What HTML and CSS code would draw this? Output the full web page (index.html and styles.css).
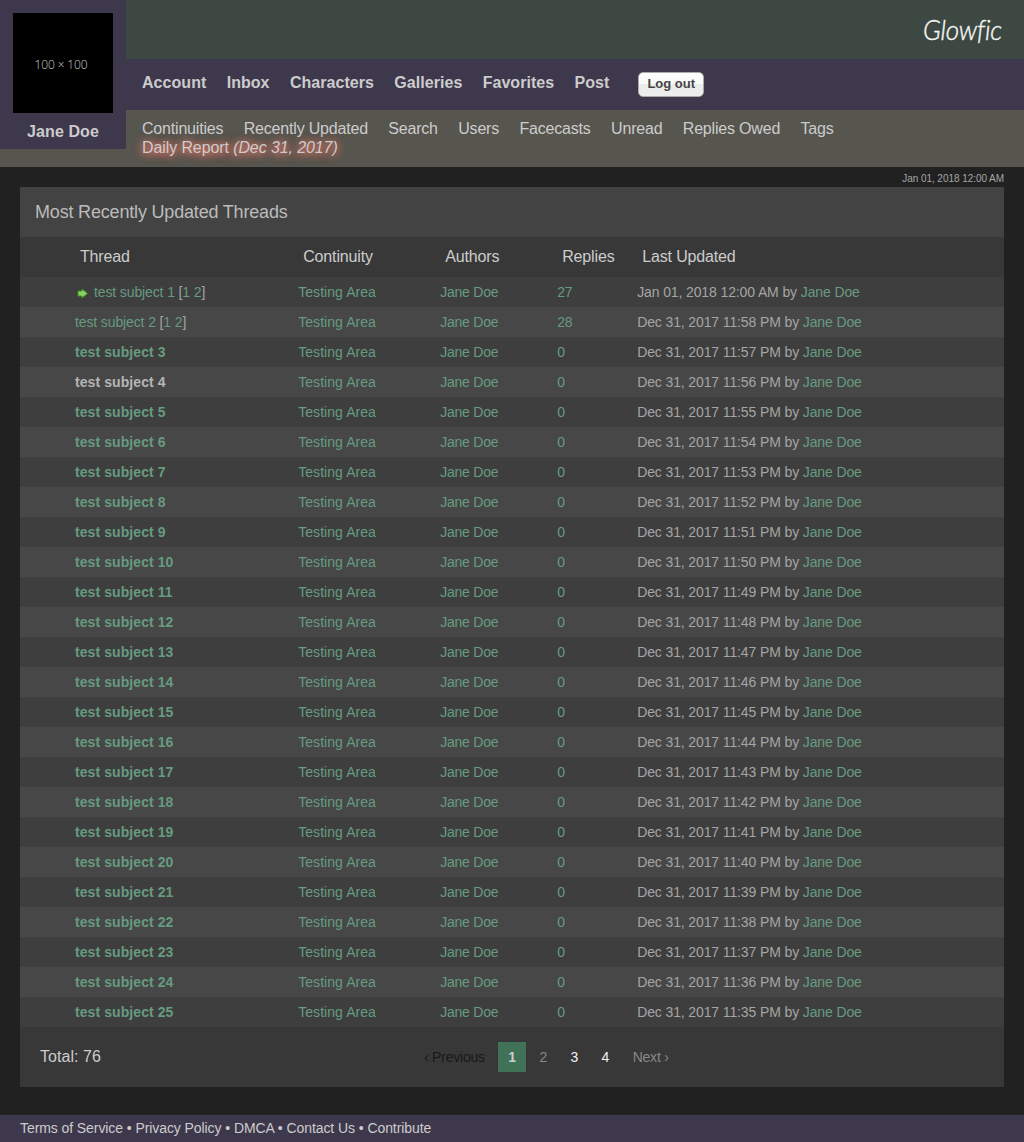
FILE: index.html
```
<!DOCTYPE html>
<html lang="en">
<head>
<meta charset="utf-8">
<title>Glowfic - Most Recently Updated Threads</title>
<link rel="stylesheet" href="styles.css">
</head>
<body>
<header class="header">
  <div class="banner">
    <svg class="logo" width="84" height="36" viewBox="0 0 84 36" role="img"><text x="3" y="27" textLength="79" lengthAdjust="spacingAndGlyphs">Glowfic</text></svg>
  </div>
  <aside class="user">
    <div class="avatar">100 × 100</div>
    <a class="username">Jane Doe</a>
  </aside>
  <nav class="menu">
    <a>Account</a><a>Inbox</a><a>Characters</a><a>Galleries</a><a>Favorites</a><a>Post</a>
    <button class="logout">Log out</button>
  </nav>
  <nav class="submenu">
    <div class="links"><a>Continuities</a><a>Recently Updated</a><a>Search</a><a>Users</a><a>Facecasts</a><a>Unread</a><a>Replies Owed</a><a>Tags</a></div>
    <a class="report">Daily Report <em>(Dec 31, 2017)</em></a>
  </nav>
</header>
<main class="content">
  <div class="clock">Jan 01, 2018 12:00 AM</div>
  <h1 class="title">Most Recently Updated Threads</h1>
  <table class="threads">
    <colgroup><col class="c-thread"><col class="c-continuity"><col class="c-authors"><col class="c-replies"><col></colgroup>
    <thead><tr><th>Thread</th><th>Continuity</th><th>Authors</th><th>Replies</th><th>Last Updated</th></tr></thead>
    <tbody id="rows"></tbody>
  </table>
  <div class="pager">
    <div class="total">Total: 76</div>
    <div class="pages"><span class="prev">‹ Previous</span><span class="current">1</span><a class="visited">2</a><a>3</a><a>4</a><a class="visited next">Next ›</a></div>
  </div>
</main>
<footer class="footer"><a>Terms of Service</a> • <a>Privacy Policy</a> • <a>DMCA</a> • <a>Contact Us</a> • <a>Contribute</a></footer>
<script src="app.js"></script>
</body>
</html>
```
FILE: styles.css
```
body {
  margin: 0;
  min-height: 1142px;
  display: flex;
  flex-direction: column;
  background: #212121;
  color: #a5a5a5;
  font: 14px/18px "Liberation Sans", Arial, Helvetica, sans-serif;
  letter-spacing: -0.15px;
}
.header {
  display: grid;
  grid-template-columns: 126px 1fr;
  grid-template-rows: 59px 51px 57px;
  background: #56554e;
  color: #ccc;
  font-size: 16px;
}
.banner {
  grid-column: 2;
  grid-row: 1;
  display: flex;
  justify-content: flex-end;
  padding: 13px 20px 0 0;
  background: #3c4841;
}
.logo { overflow: visible; }
.logo text {
  fill: #f5f5f5;
  font: italic 300 27px Lato, sans-serif;
  stroke: #f5f5f5;
  stroke-width: 0.4px;
}
.user {
  grid-column: 1;
  grid-row: 1 / 4;
  height: 149px;
  box-sizing: border-box;
  padding-top: 13px;
  display: flex;
  flex-direction: column;
  align-items: center;
  background: #3e384d;
}
.avatar {
  width: 100px;
  height: 100px;
  box-sizing: border-box;
  padding-right: 4px;
  background: #000;
  color: #ccc;
  font: 300 12px/104px "Open Sans", sans-serif;
  text-align: center;
}
.username {
  margin-top: 10px;
  font-weight: bold;
  letter-spacing: 0.1px;
}
.menu {
  display: flex;
  gap: 20.3px;
  padding: 15px 16px 0;
  background: #3e384d;
  font-weight: bold;
  letter-spacing: 0.05px;
}
.logout {
  width: 66px;
  height: 25px;
  margin: -2px 0 0 8.5px;
  padding: 0 0 2px;
  border: 1px solid #aaa;
  border-radius: 5px;
  background: linear-gradient(#fff, #f8f8f8 49%, #ebebeb 50%, #eee);
  color: #444;
  font: bold 13px "Liberation Sans", Arial, sans-serif;
}
.submenu { padding: 9px 16px 0; line-height: 19px; letter-spacing: -0.19px; }
.links { display: flex; gap: 20.4px; }
.report { letter-spacing: -0.1px; text-shadow: 0 0 10px #ff7c6c, 0 2px 8px #ff7c6c; }
.content { padding: 0 20px 28px; }
.clock {
  height: 20px;
  font-size: 10px;
  line-height: 23px;
  text-align: right;
  letter-spacing: -0.05px;
}
.title {
  margin: 0;
  padding-left: 15px;
  background: #434343;
  color: #bbb;
  font-size: 18px;
  font-weight: normal;
  line-height: 50px;
  letter-spacing: -0.18px;
}
.threads {
  width: 100%;
  table-layout: fixed;
  border-collapse: collapse;
}
.c-thread { width: 273px; }
.c-continuity { width: 142px; }
.c-authors { width: 117px; }
.c-replies { width: 80px; }
.threads th {
  height: 40px;
  padding: 0 0 0 10.2px;
  background: #383838;
  color: #ccc;
  font-size: 16px;
  font-weight: normal;
  text-align: left;
}
.threads td {
  height: 30px;
  padding: 0 5.2px;
  background: #3e3e3e;
  white-space: nowrap;
  letter-spacing: -0.12px;
}
.threads td:nth-child(2) { letter-spacing: 0.06px; }
.threads td:nth-child(3) { letter-spacing: -0.22px; }
.threads tr:nth-child(even) td { background: #474747; }
.threads th:first-child { padding-left: 60px; }
.threads td:first-child { padding-left: 55px; }
.threads a { color: #669b80; }
.threads .unread { font-weight: bold; letter-spacing: 0.08px; }
.threads .plain { color: #b5b5b5; }
.arrow { margin: 0 6px 0 2px; vertical-align: -2px; }
.pager {
  display: grid;
  grid-template-columns: 384px 1fr;
  align-items: center;
  height: 60px;
  background: #383838;
}
.total { padding-left: 20px; color: #ccc; font-size: 16px; letter-spacing: 0.05px; }
.pages { display: flex; padding-left: 10px; line-height: 30px; letter-spacing: -0.22px; }
.pages > * { padding: 0 10px; margin-right: 3.5px; color: #f0f0f0; }
.pages .prev { color: #181818; }
.pages .current { background: #407257; color: #ccc; font-weight: bold; }
.pages .visited { color: #888; }
.footer {
  flex: 1;
  padding: 4px 20px 0;
  background: #3e384d;
  color: #ccc;
  letter-spacing: -0.08px;
}
```
FILE: app.js
```
const arrow = '<svg class="arrow" width="11" height="11" viewBox="0 0 11 11"><path d="M1 3H5V1L10.5 5.5L5 10V8H1Z" fill="#8fcf68" stroke="#379316"/></svg>';
const pageLinks = ' [<a>1</a> <a>2</a>]';
const rows = [];
for (let n = 1; n <= 25; n++) {
  let subject = `<a class="${n > 2 ? 'unread' : ''}${n === 4 ? ' plain' : ''}">test subject ${n}</a>`;
  if (n === 1) subject = arrow + subject;
  if (n < 3) subject += pageLinks;
  const replies = n === 1 ? 27 : n === 2 ? 28 : 0;
  const time = n === 1 ? 'Jan 01, 2018 12:00 AM' : `Dec 31, 2017 11:${60 - n} PM`;
  rows.push(`<tr><td>${subject}</td><td><a>Testing Area</a></td><td><a>Jane Doe</a></td><td><a>${replies}</a></td><td>${time} by <a>Jane Doe</a></td></tr>`);
}
document.getElementById('rows').innerHTML = rows.join('');
```
